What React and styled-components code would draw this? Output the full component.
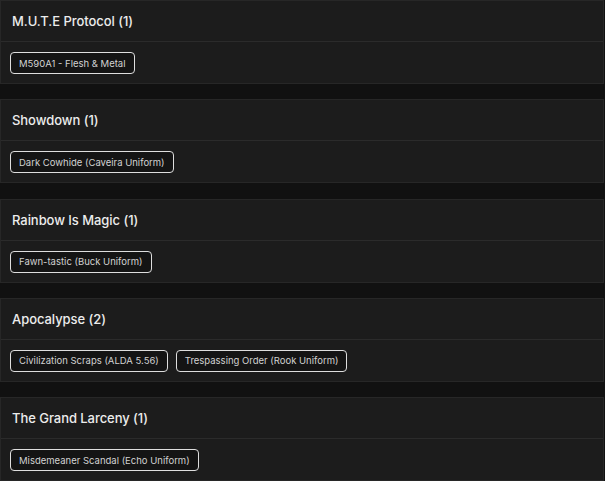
import React from "react";
import styled, { createGlobalStyle } from "styled-components";

const Global = createGlobalStyle`
  html, body { margin: 0; padding: 0; background: #111111; }
  body { font-family: Inter, "Open Sans", sans-serif; }
`;

const Page = styled.div`
  display: flex;
  flex-direction: column;
  gap: 15.25px;
  width: 605px;
`;

const Card = styled.section`
  background: #1c1c1c;
  border: 1px solid #272727;
  box-sizing: border-box;
  width: 604px;
`;

const Header = styled.div`
  height: 40px;
  display: flex;
  align-items: center;
  padding: 0 11px;
  border-bottom: 1px solid #2b2b2b;
`;

const Title = styled.h3`
  margin: 0;
  font-size: 13px;
  font-weight: 500;
  color: #ececec;
  letter-spacing: -0.05px;
`;

const Body = styled.div`
  display: flex;
  gap: 8px;
  padding: 10px 9px 9px;
`;

const Tag = styled.button`
  height: 22px;
  padding: 0 8px;
  background: #141414;
  border: 1.5px solid #dedede;
  border-radius: 4px;
  color: #d2d2d2;
  font-family: Inter, "Open Sans", sans-serif;
  font-size: 9.5px;
  font-weight: 400;
  display: flex;
  align-items: center;
`;

const groups = [
  { title: "M.U.T.E Protocol (1)", items: ["M590A1 - Flesh & Metal"] },
  { title: "Showdown (1)", items: ["Dark Cowhide (Caveira Uniform)"] },
  { title: "Rainbow Is Magic (1)", items: ["Fawn-tastic (Buck Uniform)"] },
  { title: "Apocalypse (2)", items: ["Civilization Scraps (ALDA 5.56)", "Trespassing Order (Rook Uniform)"] },
  { title: "The Grand Larceny (1)", items: ["Misdemeaner Scandal (Echo Uniform)"] },
];

export default function App() {
  return (
    <>
      <Global />
      <Page>
        {groups.map((g) => (
          <Card key={g.title}>
            <Header>
              <Title>{g.title}</Title>
            </Header>
            <Body>
              {g.items.map((it) => (
                <Tag key={it}>{it}</Tag>
              ))}
            </Body>
          </Card>
        ))}
      </Page>
    </>
  );
}
